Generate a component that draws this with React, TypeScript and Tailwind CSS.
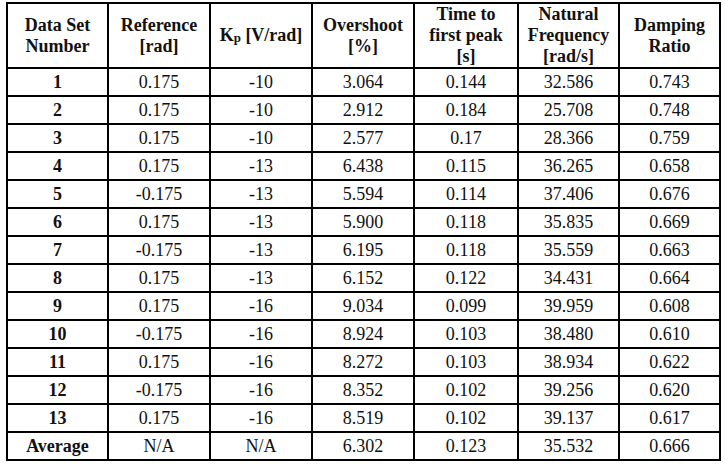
const headers = [
  ["Data Set", "Number"],
  ["Reference", "[rad]"],
  null,
  ["Overshoot", "[%]"],
  ["Time to", "first peak", "[s]"],
  ["Natural", "Frequency", "[rad/s]"],
  ["Damping", "Ratio"],
]

const rows: string[][] = [
  ["1", "0.175", "-10", "3.064", "0.144", "32.586", "0.743"],
  ["2", "0.175", "-10", "2.912", "0.184", "25.708", "0.748"],
  ["3", "0.175", "-10", "2.577", "0.17", "28.366", "0.759"],
  ["4", "0.175", "-13", "6.438", "0.115", "36.265", "0.658"],
  ["5", "-0.175", "-13", "5.594", "0.114", "37.406", "0.676"],
  ["6", "0.175", "-13", "5.900", "0.118", "35.835", "0.669"],
  ["7", "-0.175", "-13", "6.195", "0.118", "35.559", "0.663"],
  ["8", "0.175", "-13", "6.152", "0.122", "34.431", "0.664"],
  ["9", "0.175", "-16", "9.034", "0.099", "39.959", "0.608"],
  ["10", "-0.175", "-16", "8.924", "0.103", "38.480", "0.610"],
  ["11", "0.175", "-16", "8.272", "0.103", "38.934", "0.622"],
  ["12", "-0.175", "-16", "8.352", "0.102", "39.256", "0.620"],
  ["13", "0.175", "-16", "8.519", "0.102", "39.137", "0.617"],
  ["Average", "N/A", "N/A", "6.302", "0.123", "35.532", "0.666"],
]

export default function App() {
  return (
    <div className="min-h-screen bg-white pl-[6px] pt-[2px] font-serif text-[18px] text-[#111]">
      <div className="grid w-fit grid-cols-[99px_100px_100px_100px_102px_99px_99px] grid-rows-[63px_repeat(14,26px)] gap-[2px] bg-black p-[2px] [font-family:Liberation_Serif,DejaVu_Serif,serif]">
        {headers.map((lines, i) => (
          <div key={i} className="flex flex-col items-center justify-center bg-white text-center font-bold leading-[21px]">
            {lines ? (
              lines.map(l => <span key={l}>{l}</span>)
            ) : (
              <span>
                K<span className="relative top-[1px] text-[13px]">p</span> [V/rad]
              </span>
            )}
          </div>
        ))}
        {rows.map(r =>
          r.map((cell, j) => (
            <div
              key={r[0] + j}
              className={`flex items-center justify-center bg-white leading-none ${j === 0 ? "font-bold" : ""}`}
            >
              {cell}
            </div>
          ))
        )}
      </div>
    </div>
  )
}
